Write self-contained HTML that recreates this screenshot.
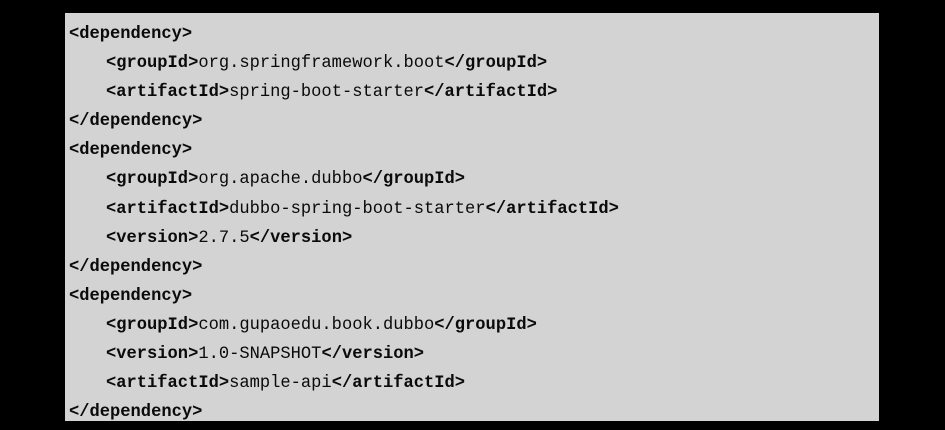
<!DOCTYPE html>
<html><head><style>
html,body{margin:0;padding:0;background:#000;width:945px;height:430px;overflow:hidden}
.box{position:absolute;left:65px;top:13px;width:814px;height:408px;background:#d3d3d3}
.c{position:absolute;left:69px;top:20px;margin:0;font-family:"Liberation Mono",monospace;font-size:17.1px;line-height:29.1px;color:#0a0a0a}
.c div{white-space:pre;height:29.1px}
.c .i{padding-left:37px}
b{font-weight:bold}
</style></head><body>
<div class="box"></div>
<div class="c"><div><b>&lt;dependency&gt;</b></div><div class="i"><b>&lt;groupId&gt;</b>org.springframework.boot<b>&lt;/groupId&gt;</b></div><div class="i"><b>&lt;artifactId&gt;</b>spring-boot-starter<b>&lt;/artifactId&gt;</b></div><div><b>&lt;/dependency&gt;</b></div><div><b>&lt;dependency&gt;</b></div><div class="i"><b>&lt;groupId&gt;</b>org.apache.dubbo<b>&lt;/groupId&gt;</b></div><div class="i"><b>&lt;artifactId&gt;</b>dubbo-spring-boot-starter<b>&lt;/artifactId&gt;</b></div><div class="i"><b>&lt;version&gt;</b>2.7.5<b>&lt;/version&gt;</b></div><div><b>&lt;/dependency&gt;</b></div><div><b>&lt;dependency&gt;</b></div><div class="i"><b>&lt;groupId&gt;</b>com.gupaoedu.book.dubbo<b>&lt;/groupId&gt;</b></div><div class="i"><b>&lt;version&gt;</b>1.0-SNAPSHOT<b>&lt;/version&gt;</b></div><div class="i"><b>&lt;artifactId&gt;</b>sample-api<b>&lt;/artifactId&gt;</b></div><div><b>&lt;/dependency&gt;</b></div></div>
</body></html>
